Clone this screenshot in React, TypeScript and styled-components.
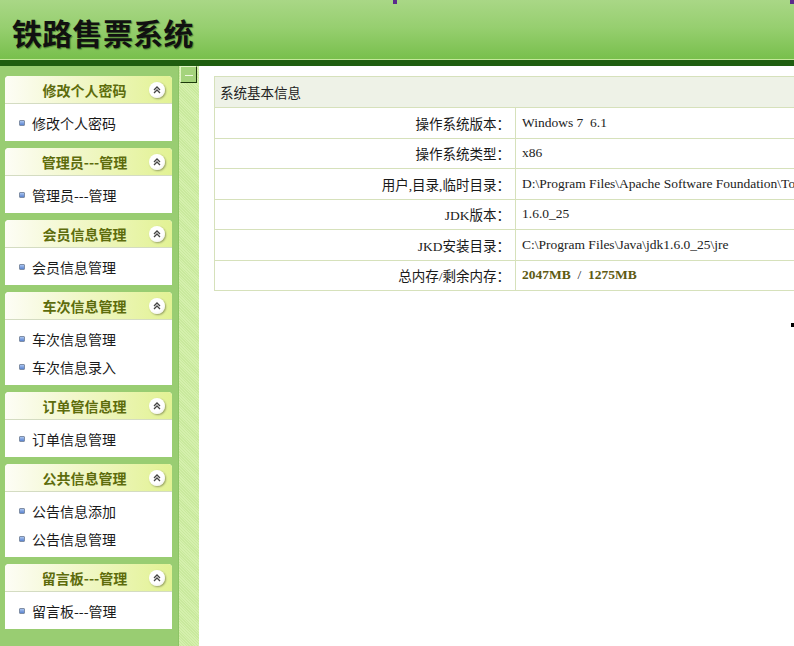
import type { ReactNode } from "react";
import styled, { createGlobalStyle } from "styled-components";

const GlobalStyle = createGlobalStyle`
  html, body {
    margin: 0;
    padding: 0;
    height: 100%;
    overflow: hidden;
    background: #fff;
  }
  body {
    font-family: "Noto Sans CJK SC", "Noto Sans", sans-serif;
  }
`;

const menus = [
  { title: "修改个人密码", items: ["修改个人密码"] },
  { title: "管理员---管理", items: ["管理员---管理"] },
  { title: "会员信息管理", items: ["会员信息管理"] },
  { title: "车次信息管理", items: ["车次信息管理", "车次信息录入"] },
  { title: "订单管信息理", items: ["订单信息管理"] },
  { title: "公共信息管理", items: ["公告信息添加", "公告信息管理"] },
  { title: "留言板---管理", items: ["留言板---管理"] },
];

const App = () => {
  const infoRows: { label: string; value: ReactNode }[] = [
    { label: "操作系统版本：", value: "Windows 7\u00a0\u00a06.1" },
    { label: "操作系统类型：", value: "x86" },
    {
      label: "用户,目录,临时目录：",
      value: "D:\\Program Files\\Apache Software Foundation\\Tomcat 6.0",
    },
    { label: "JDK版本：", value: "1.6.0_25" },
    { label: "JKD安装目录：", value: "C:\\Program Files\\Java\\jdk1.6.0_25\\jre" },
    {
      label: "总内存/剩余内存：",
      value: (
        <>
          <Mem>2047MB</Mem>&nbsp;&nbsp;/&nbsp;&nbsp;<Mem>1275MB</Mem>
        </>
      ),
    },
  ];

  return (
    <Page>
      <GlobalStyle />
      <Header>
        <Title>铁路售票系统</Title>
      </Header>
      <Body>
        <Sidebar>
          {menus.map((menu) => (
            <Panel key={menu.title}>
              <PanelHead>
                <PanelTitle>{menu.title}</PanelTitle>
                <Collapse>
                  <svg width="8" height="8" viewBox="0 0 8 8">
                    <path
                      d="M1 4 L4 1 L7 4 M1 7 L4 4 L7 7"
                      fill="none"
                      stroke="#444"
                      strokeWidth="1.3"
                    />
                  </svg>
                </Collapse>
              </PanelHead>
              <PanelBody>
                {menu.items.map((item) => (
                  <MenuItem key={item}>
                    <Bullet />
                    {item}
                  </MenuItem>
                ))}
              </PanelBody>
            </Panel>
          ))}
        </Sidebar>
        <Splitter>
          <ToggleButton>
            <span />
          </ToggleButton>
        </Splitter>
        <Main>
          <InfoTable>
            <colgroup>
              <col style={{ width: 301 }} />
              <col />
            </colgroup>
            <tbody>
              <tr>
                <HeadCell colSpan={2}>系统基本信息</HeadCell>
              </tr>
              {infoRows.map((row) => (
                <tr key={row.label}>
                  <LabelCell>{row.label}</LabelCell>
                  <ValueCell>{row.value}</ValueCell>
                </tr>
              ))}
            </tbody>
          </InfoTable>
        </Main>
      </Body>
      <Mark $x={393} $y={0} $color="#5b2a8c" />
      <Mark $x={790} $y={0} $color="#5b2a8c" />
      <Mark $x={791} $y={323} $color="#000" />
    </Page>
  );
};

const Page = styled.div`
  position: relative;
  height: 100vh;
  display: flex;
  flex-direction: column;
  overflow: hidden;
`;

const Header = styled.div`
  height: 60px;
  flex-shrink: 0;
  display: flex;
  align-items: center;
  padding-left: 12px;
  background: linear-gradient(to bottom, #a9d786 0%, #97cf70 45%, #77bf4b 100%);
  box-shadow: inset 0 -1px 0 #c4e79a;
  border-bottom: 6px solid #1f5e10;
`;

const Title = styled.h1`
  margin: 0;
  margin-top: 4px;
  font-size: 30px;
  font-weight: bold;
  letter-spacing: 0.3px;
  color: #111;
  text-shadow: 1px 1px 1px rgba(40, 90, 20, 0.6);
`;

const Body = styled.div`
  flex: 1;
  display: flex;
  min-height: 0;
`;

const Sidebar = styled.div`
  width: 178px;
  flex-shrink: 0;
  box-sizing: border-box;
  padding: 10px 6px 0 5px;
  background: #99cd72;
  display: flex;
  flex-direction: column;
  gap: 7px;
`;

const Panel = styled.div`
  width: 167px;
  background: #fff;
  border-radius: 4px 4px 0 0;
`;

const PanelHead = styled.div`
  height: 27px;
  display: flex;
  align-items: center;
  padding-left: 15px;
  padding-right: 7px;
  border-radius: 4px 4px 0 0;
  border-bottom: 1px solid #d4dcc2;
  background: linear-gradient(to right, #fdfdf6 0%, #f1f7c8 45%, #e2f294 100%);
`;

const PanelTitle = styled.span`
  flex: 1;
  text-align: center;
  font-size: 14px;
  font-weight: bold;
  color: #5d6c0c;
`;

const Collapse = styled.span`
  width: 16px;
  height: 16px;
  border-radius: 50%;
  display: flex;
  align-items: center;
  justify-content: center;
  background: radial-gradient(circle at 40% 35%, #ffffff 55%, #e4e4e4 100%);
  box-shadow: 1px 1px 2px rgba(0, 0, 0, 0.35);
`;

const PanelBody = styled.div`
  padding: 4px 0 4px 14px;
`;

const MenuItem = styled.div`
  height: 28px;
  display: flex;
  align-items: center;
  gap: 7px;
  font-size: 14px;
  color: #1a1a1a;
  &:first-child {
    height: 29px;
  }
`;

const Bullet = styled.span`
  width: 4px;
  height: 4px;
  border: 1px solid #7f8ea6;
  border-radius: 1px;
  background: linear-gradient(to bottom, #a9c4f0, #5a83cf);
`;

const Splitter = styled.div`
  width: 21px;
  flex-shrink: 0;
  box-sizing: border-box;
  border-left: 1px solid #8dc466;
  background: repeating-linear-gradient(45deg, #d5f0ad 0 1px, #c9e99d 1px 2px);
`;

const ToggleButton = styled.div`
  width: 17px;
  height: 17px;
  margin-left: 1px;
  box-sizing: border-box;
  border: 1px solid;
  border-color: #e2f6c4 #1d3a0c #1d3a0c #e2f6c4;
  background: #a5d47c;
  display: flex;
  align-items: center;
  justify-content: center;
  span {
    width: 8px;
    height: 1px;
    margin-top: 2px;
    background: #eef8de;
  }
`;

const Main = styled.div`
  flex: 1;
  min-width: 0;
  overflow: hidden;
  padding: 10px 0 0 15px;
`;

const InfoTable = styled.table`
  width: 640px;
  table-layout: fixed;
  border-collapse: collapse;
  font-size: 13px;
  color: #222;
  td {
    border: 1px solid #d6e1bb;
    height: 29.5px;
    padding: 0;
    white-space: nowrap;
    overflow: hidden;
  }
`;

const HeadCell = styled.td`
  && {
    height: 30px;
    padding-left: 5px;
  }
  background: #eef2e7;
  font-size: 13.5px;
  font-family: "Noto Sans CJK SC", sans-serif;
`;

const LabelCell = styled.td`
  text-align: right;
  && {
    padding-right: 5px;
  }
  font-size: 13.5px;
  color: #1a1a1a;
  font-family: "Liberation Serif", "Noto Sans CJK SC", serif;
`;

const ValueCell = styled.td`
  && {
    padding-left: 6px;
  }
  font-size: 13.5px;
  font-family: "Liberation Serif", "Noto Sans CJK SC", serif;
`;

const Mem = styled.b`
  color: #5e5a12;
`;

const Mark = styled.span<{ $x: number; $y: number; $color: string }>`
  position: absolute;
  left: ${({ $x }) => $x}px;
  top: ${({ $y }) => $y}px;
  width: 4px;
  height: 4px;
  background: ${({ $color }) => $color};
`;

export default App;
